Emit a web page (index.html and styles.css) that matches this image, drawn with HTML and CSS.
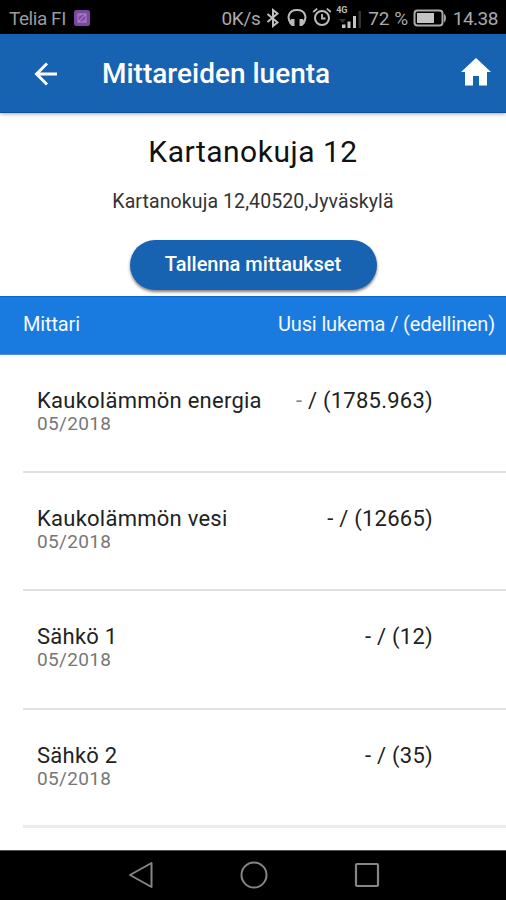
FILE: index.html
```
<!DOCTYPE html>
<html lang="fi">
<head>
<meta charset="utf-8">
<title>Mittareiden luenta</title>
<link rel="stylesheet" href="styles.css">
</head>
<body>
<div class="screen">
  <div class="status">
    <span class="carrier">Telia FI</span>
    <svg class="badge" width="18" height="18" viewBox="0 0 18 18"><rect x="1" y="1" width="16" height="16" rx="2.5" fill="#7b48a0"/><path d="M5 5h8v8H5zM5 13l8-8M6 7l2-1M10 12l2-1" fill="none" stroke="#b58bd0" stroke-width="1.3" opacity=".7"/></svg>
    <span class="speed">0K/s</span>
    <svg class="bt" width="14" height="20" viewBox="0 0 14 20"><path d="M1.500 6l10 8.500L7 18V2l4.500 3.500-10 8.500" fill="none" stroke="#c0c0c0" stroke-width="2"/></svg>
    <svg class="phones" width="20" height="20" viewBox="0 0 20 20"><path d="M4.500 16C-.5 11 .8 2 10 2s10.500 9 5.500 14" fill="none" stroke="#bbb" stroke-width="2"/><path d="M4 11h3.500v7H5l-3-3zM16 11h-3.500v7H15l3-3z" fill="#bbb"/></svg>
    <svg class="alarm" width="20" height="20" viewBox="0 0 20 20"><circle cx="10" cy="11" r="7" fill="none" stroke="#bbb" stroke-width="2"/><path d="M1.200 5l4-3.400M18.800 5l-4-3.400M10 7v4.500h3.500" fill="none" stroke="#bbb" stroke-width="1.800"/></svg>
    <span class="signal"><span class="gen">4G</span><svg width="28" height="24" viewBox="0 0 28 24"><path d="M3 12h7l-3.500 4z" fill="#333"/><path d="M6 17.500h3.500V21H6zM11.500 14.500h3V21h-3zM17 9h3v12h-3z" fill="#c4c4c4"/><path d="M22.500 4H25v17h-2.500z" fill="#333"/></svg></span>
    <span class="percent">72 %</span>
    <svg class="battery" width="34" height="18" viewBox="0 0 34 18"><rect x="1.500" y="1.500" width="28" height="15" rx="3" fill="none" stroke="#aaa" stroke-width="2"/><path d="M31 4.500q2 1.500 2 4.500t-2 4.500z" fill="#aaa"/><path d="M4 4h17v10H4z" fill="#c4c4c4"/></svg>
    <span class="clock">14.38</span>
  </div>
  <header class="appbar">
    <svg class="back" width="24" height="24" viewBox="0 0 24 24"><path d="M13 1.500L2.500 12 13 22.500M2.500 12H23" fill="none" stroke="#fff" stroke-width="2.900"/></svg>
    <h1>Mittareiden luenta</h1>
    <svg class="home" width="30" height="28" viewBox="0 0 30 28"><path d="M15 0L0 14h4v13.500h8V18h6v9.500h8V14h4z" fill="#fff"/></svg>
  </header>
  <section class="site">
    <h2>Kartanokuja 12</h2>
    <p>Kartanokuja 12,40520,Jyväskylä</p>
    <button>Tallenna mittaukset</button>
  </section>
  <div class="thead"><span>Mittari</span><span class="col-b">Uusi lukema / (edellinen)</span></div>
  <main class="list">
    <div class="item"><div class="meter"><span class="name">Kaukolämmön energia</span><span class="date">05/2018</span></div><span class="value"><i>-</i> / (1785.963)</span></div>
    <div class="item"><div class="meter"><span class="name">Kaukolämmön vesi</span><span class="date">05/2018</span></div><span class="value">- / (12665)</span></div>
    <div class="item"><div class="meter"><span class="name">Sähkö 1</span><span class="date">05/2018</span></div><span class="value">- / (12)</span></div>
    <div class="item last"><div class="meter"><span class="name">Sähkö 2</span><span class="date">05/2018</span></div><span class="value">- / (35)</span></div>
  </main>
  <nav class="navbar">
    <svg width="26" height="28" viewBox="0 0 26 28"><path d="M23.500 2v24L2 14z" fill="none" stroke="#858585" stroke-width="2" stroke-linejoin="round"/></svg>
    <svg width="28" height="28" viewBox="0 0 28 28"><circle cx="14" cy="14" r="12.500" fill="none" stroke="#858585" stroke-width="2"/></svg>
    <svg width="26" height="26" viewBox="0 0 26 26"><rect x="2" y="2" width="22" height="22" rx="1" fill="none" stroke="#858585" stroke-width="2.200"/></svg>
  </nav>
</div>
</body>
</html>
```
FILE: styles.css
```
* { box-sizing: border-box; }
body { margin: 0; background: #fff; font-family: Roboto, "Liberation Sans", sans-serif; }
h1, h2, p { margin: 0; }
svg { display: block; flex: none; }
.screen { width: 506px; height: 900px; display: flex; flex-direction: column; overflow: hidden; }
.status { height: 34px; flex: none; background: #000; color: #aaa; display: flex; align-items: center; padding: 2px 8px 0 9px; font-size: 19px; white-space: nowrap; }
.carrier { width: 58px; letter-spacing: -0.450px; color: #9b9b9b; }
.badge { margin-left: 7px; margin-top: -1px; }
.speed { margin-left: 130px; width: 40px; letter-spacing: -0.3px; }
.bt { margin-left: 5px; margin-top: -1px; }
.phones { margin-left: 7px; margin-top: -1px; }
.alarm { margin-left: 5px; margin-top: -2px; }
.signal { position: relative; margin-left: 4px; }
.gen { position: absolute; left: 0; top: 0; font-size: 9px; line-height: 10px; font-weight: 700; color: #bbb; }
.signal svg { margin-top: 2px; }
.percent { margin-left: 4px; width: 42px; }
.battery { margin-left: 3px; }
.clock { margin-left: 6px; letter-spacing: -0.5px; }
.appbar { height: 79px; flex: none; background: #1763b2; color: #fff; display: flex; align-items: center; padding: 2px 15px 0 34px; border-bottom: 1px solid #0b4fa4; position: relative; box-shadow: 0 1px 4px rgba(0,0,0,.35); }
.appbar h1 { margin-left: 44px; flex: 1; font-size: 28px; font-weight: 500; line-height: 32px; white-space: nowrap; }
.home { margin-top: -4px; }
.site { height: 183px; flex: none; display: flex; flex-direction: column; align-items: center; padding-top: 19px; white-space: nowrap; }
.site h2 { font-size: 30px; line-height: 40px; font-weight: 400; letter-spacing: .5px; color: #111; }
.site p { margin-top: 17px; font-size: 19.500px; line-height: 26px; color: #333; letter-spacing: .1px; }
.site button { margin-top: 25px; width: 247px; height: 50px; flex: none; border: 0; border-radius: 25px; background: #1763b2; color: #fff; font: 500 20px/24px Roboto, sans-serif; padding: 0 0 2px; box-shadow: 0 2px 3px rgba(0,0,0,.5); }
.thead { height: 59px; flex: none; background: #197bdf; color: #f4f8ff; display: flex; justify-content: space-between; align-items: center; padding: 0 11px 3px 23px; font-size: 20px; letter-spacing: -.15px; border-top: 1px solid #0867cf; border-bottom: 1px solid #4d91df; white-space: nowrap; }
.list { flex: 1; padding-left: 23px; }
.item { height: 118.200px; border-bottom: 2px solid #e1e1e1; display: flex; justify-content: space-between; padding: 32px 73px 0 14px; white-space: nowrap; }
.item.last { border-bottom: 3px solid #ededed; }
.meter { display: flex; flex-direction: column; align-items: flex-start; }
.name, .value { font-size: 22px; line-height: 28px; color: #222; letter-spacing: .25px; }
.value i { font-style: normal; color: #888; }
.date { font-size: 19px; line-height: 22px; margin-top: -2px; color: #777; letter-spacing: .35px; }
.navbar { height: 50px; flex: none; background: #000; border-top: 1px solid #555; display: flex; align-items: center; justify-content: center; gap: 86px; padding: 0 0 2px 2px; }
```
